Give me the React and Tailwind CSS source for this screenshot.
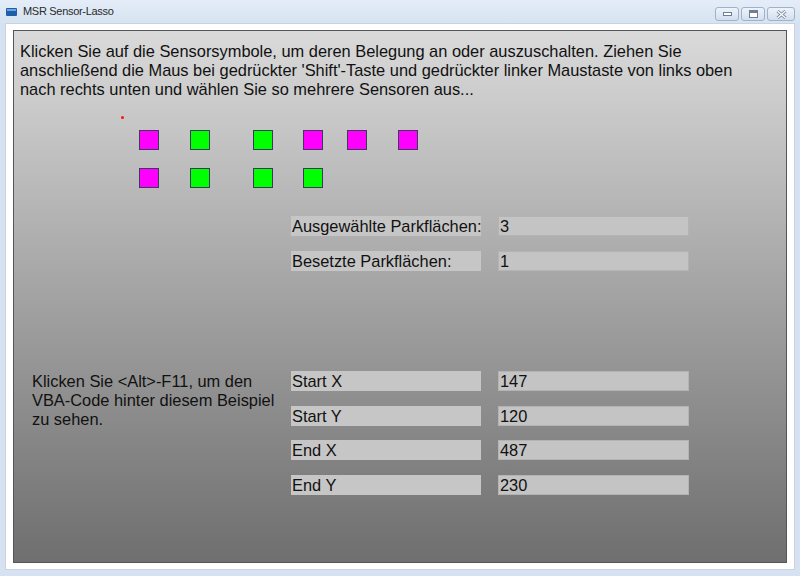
import React from 'react';

const sensors = [
  { x: 125, y: 31, on: true },
  { x: 176, y: 31, on: false },
  { x: 239, y: 31, on: false },
  { x: 289, y: 31, on: true },
  { x: 333, y: 31, on: true },
  { x: 384, y: 31, on: true },
  { x: 125, y: 69, on: true },
  { x: 176, y: 69, on: false },
  { x: 239, y: 69, on: false },
  { x: 289, y: 69, on: false },
];

function Field({ label, value }) {
  return (
    <div className="flex h-[20px] items-center gap-[17px]">
      <div className="h-full w-[190px] whitespace-nowrap bg-[#c6c6c6] pl-[1px] leading-[20px]">{label}</div>
      <div className="h-full w-[191px] border border-[#b4b4b4] bg-[#c4c4c4] pl-[1px] leading-[18px]">{value}</div>
    </div>
  );
}

function TitleButton({ w, children }) {
  return (
    <div className={`flex h-[14px] items-center justify-center rounded-[3px] border border-[#9fb2c9] bg-gradient-to-b from-[#eef3fa] to-[#d3dfee] ${w}`}>
      {children}
    </div>
  );
}

export default function App() {
  return (
    <div className="flex h-[576px] w-[800px] flex-col bg-[#d6e2f2] font-['Liberation_Sans',Arial,sans-serif] text-[#111]">
      {/* title bar */}
      <div className="flex h-[23px] items-center bg-gradient-to-b from-[#e4edf8] to-[#d7e3f2] pl-[6px] pr-[5px]">
        <svg width="11" height="8" viewBox="0 0 11 8" className="mr-[6px]">
          <rect x="0" y="0" width="11" height="8" rx="1" fill="#1f5fa8" />
          <rect x="1" y="1" width="9" height="2" fill="#6ea6e0" />
        </svg>
        <span className="text-[11px] text-[#2a2a2a] tracking-[-0.3px]">MSR Sensor-Lasso</span>
        <div className="ml-auto mt-[5px] flex gap-[2px]">
          <TitleButton w="w-[24px]">
            <div className="h-[4px] w-[9px] border border-[#6e7f95] bg-white" />
          </TitleButton>
          <TitleButton w="w-[24px]">
            <div className="h-[8px] w-[9px] border border-[#6e7f95] border-t-[3px] bg-white" />
          </TitleButton>
          <TitleButton w="w-[28px]">
            <svg width="11" height="9" viewBox="0 0 11 9">
              <path d="M1.5 1 L9.5 8 M9.5 1 L1.5 8" stroke="#7d8ea4" strokeWidth="3" />
              <path d="M1.5 1 L9.5 8 M9.5 1 L1.5 8" stroke="#fff" strokeWidth="1.2" />
            </svg>
          </TitleButton>
        </div>
      </div>

      {/* client frame */}
      <div className="flex flex-1 px-[5px] pb-[6px]">
        <div className="flex flex-1 border border-[#c9d4e2] bg-white px-[7px] pt-[6px] pb-[6px]">
          <div className="flex flex-1 flex-col border border-[#555] bg-gradient-to-b from-[#dadada] to-[#6f6f6f] text-[16.4px] leading-[19px]">
            <p className="ml-[6px] mt-[11px]">
              Klicken Sie auf die Sensorsymbole, um deren Belegung an oder auszuschalten. Ziehen Sie
              <br />
              anschließend die Maus bei gedrückter 'Shift'-Taste und gedrückter linker Maustaste von links oben
              <br />
              nach rechts unten und wählen Sie so mehrere Sensoren aus...
            </p>

            {/* sensor canvas */}
            <div className="relative h-[100px] shrink-0">
              <div className="absolute left-[107px] top-[17px] h-[3px] w-[3px] rounded-full bg-[#ff1010]" />
              {sensors.map((s, i) => (
                <div
                  key={i}
                  className={`absolute h-[20px] w-[20px] border border-[#3a3a5a] ${s.on ? 'bg-[#ff00ff]' : 'bg-[#00ff00]'}`}
                  style={{ left: s.x, top: s.y }}
                />
              ))}
            </div>

            <div className="ml-[277px] mt-[17px] flex flex-col gap-[15px]">
              <Field label="Ausgewählte Parkflächen:" value="3" />
              <Field label="Besetzte Parkflächen:" value="1" />
            </div>

            <div className="mt-[100px] flex">
              <p className="ml-[18px] w-[259px] pt-[1px]">
                Klicken Sie &lt;Alt&gt;-F11, um den
                <br />
                VBA-Code hinter diesem Beispiel
                <br />
                zu sehen.
              </p>
              <div className="flex flex-col gap-[14.6px]">
                <Field label="Start X" value="147" />
                <Field label="Start Y" value="120" />
                <Field label="End X" value="487" />
                <Field label="End Y" value="230" />
              </div>
            </div>
          </div>
        </div>
      </div>
    </div>
  );
}
